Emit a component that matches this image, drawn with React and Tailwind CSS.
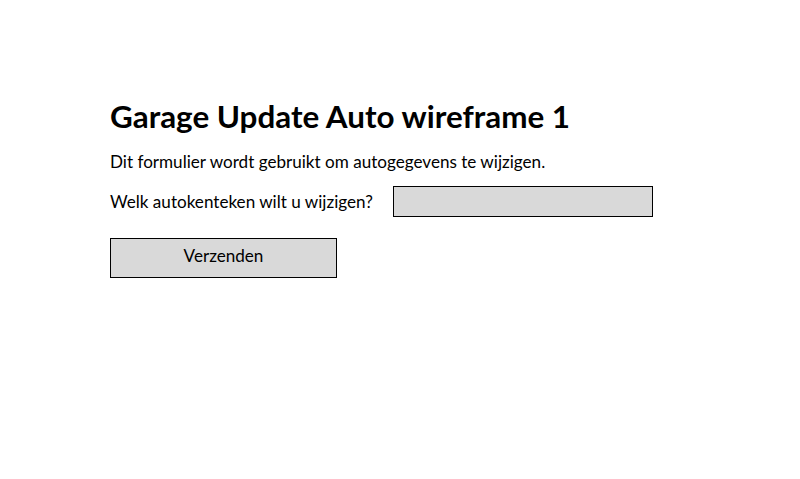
export default function App() {
  return (
    <div className="w-[800px] h-[479px] bg-white pl-[110px] pt-[96px] text-black" style={{fontFamily: "Lato, 'Liberation Sans', sans-serif"}}>
      <h1 className="text-[31.4px] leading-[40px] font-bold whitespace-nowrap">Garage Update Auto wireframe 1</h1>
      <p className="mt-[15px] text-[17.1px] leading-[22px] whitespace-nowrap">Dit formulier wordt gebruikt om autogegevens te wijzigen.</p>
      <div className="mt-[13px] flex items-center h-[31px]">
        <span className="w-[283px] text-[17.1px] leading-[22px] whitespace-nowrap">Welk autokenteken wilt u wijzigen?</span>
        <div className="w-[260px] h-[31px] bg-[#d9d9d9] border border-black"></div>
      </div>
      <button className="mt-[21px] w-[227px] h-[40px] bg-[#d9d9d9] border border-black flex items-start justify-center pt-[6px] text-[17.1px] leading-[22px]">Verzenden</button>
    </div>
  );
}
